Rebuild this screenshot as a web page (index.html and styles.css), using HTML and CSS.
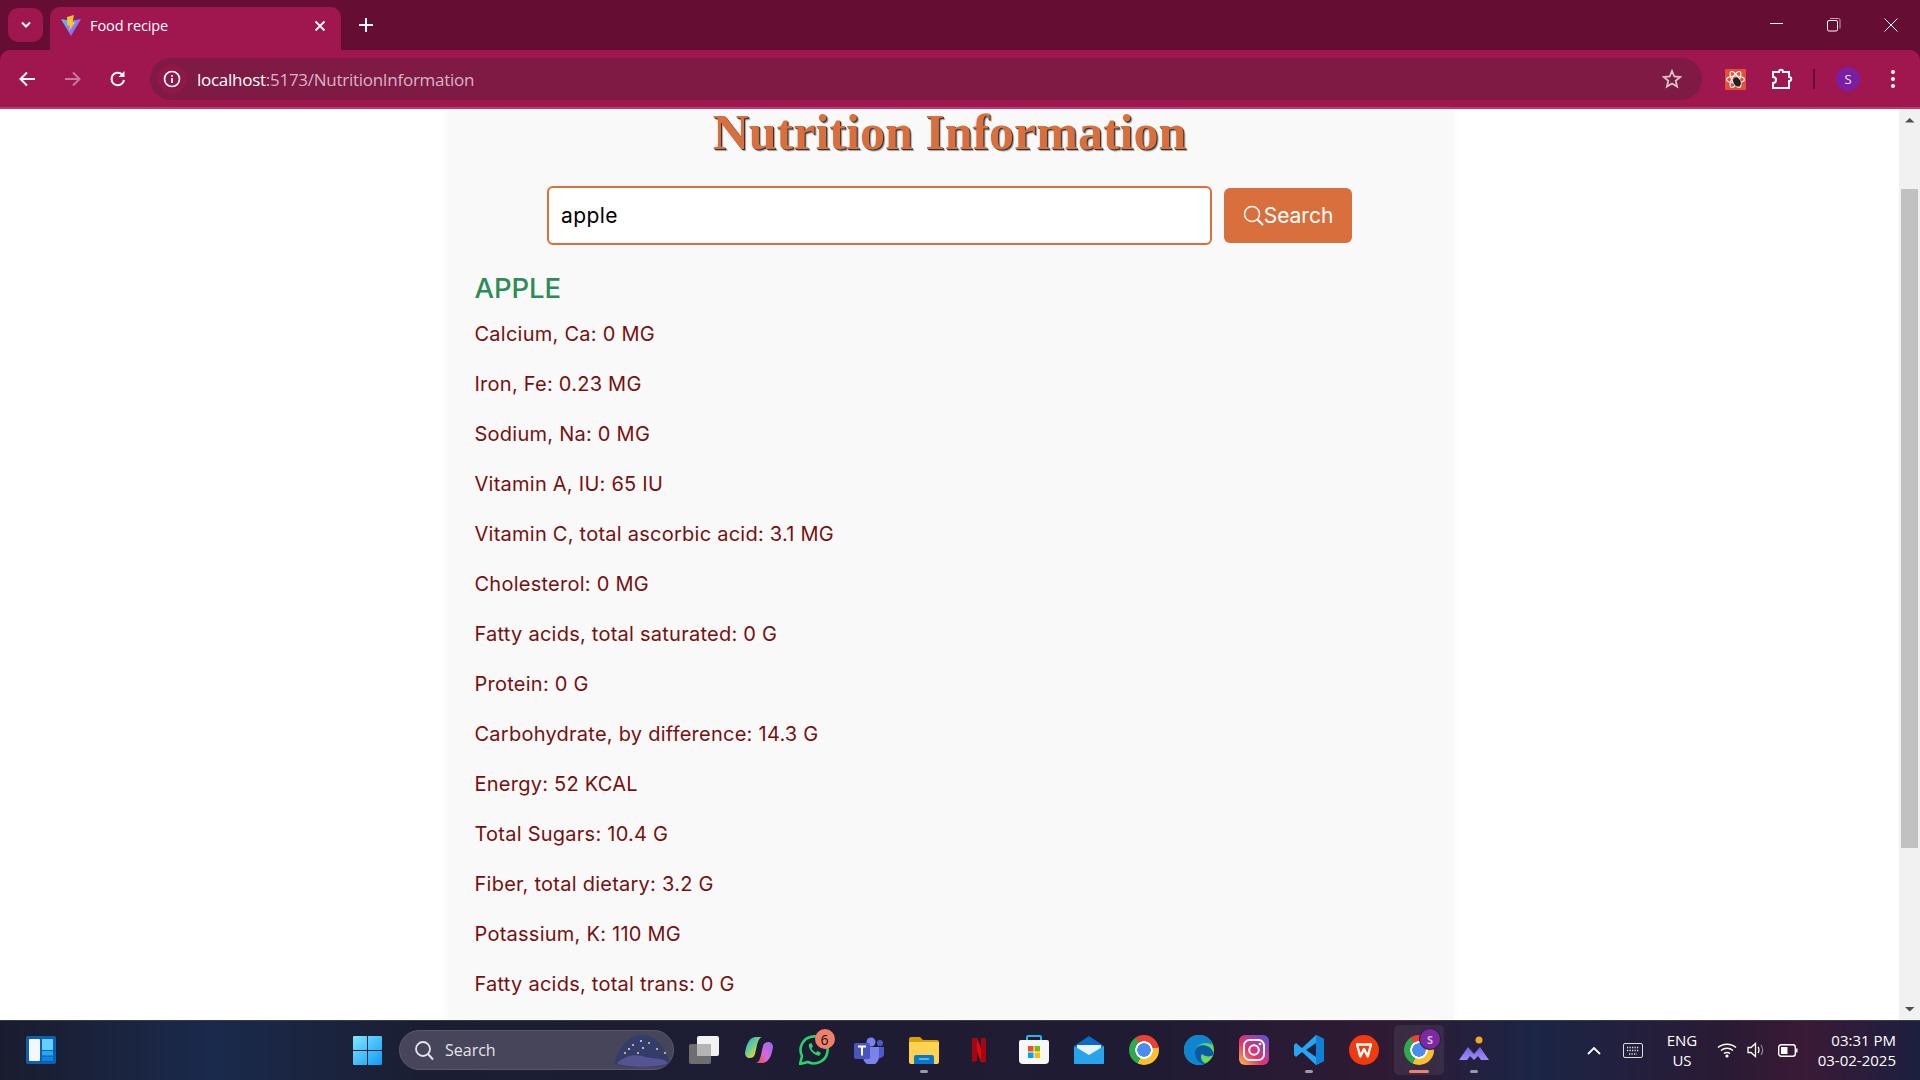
FILE: index.html
```html
<!DOCTYPE html>
<html lang="en">
<head>
<meta charset="utf-8">
<title>Food recipe</title>
<link rel="stylesheet" href="styles.css">
</head>
<body>
<div class="window">
  <header class="chrome">
    <div class="tabstrip">
      <button class="tab-menu"><svg width="12" height="8" viewBox="0 0 12 8"><path d="M2 1.500 6 5.500 10 1.500" fill="none" stroke="#fff" stroke-width="2"/></svg></button>
      <div class="tab">
        <svg class="favicon" width="22" height="22" viewBox="0 0 22 22"><defs><linearGradient id="vg" x1="0" y1="0" x2="1" y2="1"><stop offset="0" stop-color="#41d1ff"/><stop offset="1" stop-color="#bd34fe"/></linearGradient></defs><path d="M1 4 11 6 21 4 11 21Z" fill="url(#vg)"/><path d="M14 0 7 2 7.500 11 10 10.500 9 16 15.500 7 12.500 7.500Z" fill="#ffc62b"/></svg>
        <span class="tab-title">Food recipe</span>
        <svg class="tab-close" width="12" height="12" viewBox="0 0 12 12"><path d="M1.500 1.500 10.500 10.500M10.500 1.500 1.500 10.500" stroke="#fff" stroke-width="1.800"/></svg>
      </div>
      <svg class="new-tab" width="14" height="14" viewBox="0 0 14 14"><path d="M7 0V14M0 7H14" stroke="#fff" stroke-width="2"/></svg>
      <div class="win-controls">
        <svg width="14" height="14" viewBox="0 0 14 14"><path d="M0 5.500H13" stroke="#fff"/></svg>
        <svg width="14" height="14" viewBox="0 0 14 14"><rect x=".5" y="2.500" width="10" height="10.500" rx="1.500" fill="none" stroke="#fff"/><path d="M3 .5H11.500A1.500 1.500 0 0 1 13 2V10.500" fill="none" stroke="#c9a0b4"/></svg>
        <svg width="14" height="14" viewBox="0 0 14 14"><path d="M.5 .5 13.500 13.500M13.500 .5 .5 13.500" stroke="#fff"/></svg>
      </div>
    </div>
    <div class="toolbar">
      <svg class="nav-icon" width="18" height="18" viewBox="0 0 18 18"><path d="M17 9H3M9 2.500 2.500 9 9 15.500" fill="none" stroke="#fff" stroke-width="2"/></svg>
      <svg class="nav-icon" width="18" height="18" viewBox="0 0 18 18"><path d="M1 9H15M9 2.500 15.500 9 9 15.500" fill="none" stroke="#c77a9b" stroke-width="2"/></svg>
      <svg class="nav-icon" width="18" height="18" viewBox="0 0 18 18"><path d="M15 10A6.300 6.300 0 1 1 13 4.300" fill="none" stroke="#fff" stroke-width="2"/><path d="M15.500 1V7H9.500Z" fill="#fff"/></svg>
      <div class="omnibox">
        <span class="info"><svg width="18" height="18" viewBox="0 0 18 18"><circle cx="9" cy="9" r="7.500" fill="none" stroke="#fff" stroke-width="1.700"/><path d="M9 8V13M9 5V6.800" stroke="#fff" stroke-width="1.800"/></svg></span>
        <span class="url"><span class="url-host">localhost</span>:5173/NutritionInformation</span>
        <svg class="star" width="20" height="20" viewBox="0 0 20 20"><path d="M10 2 12.300 7.500 18.200 8 13.700 11.800 15.100 17.600 10 14.500 4.900 17.600 6.300 11.800 1.800 8 7.700 7.500Z" fill="none" stroke="#d6c3cb" stroke-width="1.800"/></svg>
      </div>
      <span class="ext-devtools"><svg width="21" height="21" viewBox="0 0 21 21"><rect width="21" height="21" rx="1" fill="#e2503a"/><g fill="none" stroke="#fff" stroke-width="1.200"><ellipse cx="10.500" cy="10.500" rx="9" ry="3.500"/><ellipse cx="10.500" cy="10.500" rx="9" ry="3.500" transform="rotate(60 10.500 10.500)"/><ellipse cx="10.500" cy="10.500" rx="9" ry="3.500" transform="rotate(120 10.500 10.500)"/></g><ellipse cx="12" cy="13" rx="3.500" ry="4.500" fill="#222" transform="rotate(-30 12 13)"/></svg></span>
      <svg class="puzzle" width="22" height="22" viewBox="0 0 22 22"><path d="M2 4H8C8 1 12 1 12 4H18V9C21 9 21 13 18 13V20H2V15C6 15 6 9 2 9Z" fill="none" stroke="#fff" stroke-width="2"/></svg>
      <span class="tool-divider"></span>
      <span class="avatar">S</span>
      <svg class="kebab" width="6" height="20" viewBox="0 0 6 20"><circle cx="3" cy="3" r="2" fill="#fff"/><circle cx="3" cy="10" r="2" fill="#fff"/><circle cx="3" cy="17" r="2" fill="#fff"/></svg>
    </div>
  </header>

  <div class="viewport">
    <main class="page">
      <section class="card">
        <h1 class="title">Nutrition Information</h1>
        <form class="search-form">
          <input class="search-input" type="text" value="apple">
          <button class="search-btn" type="button">
            <svg width="21" height="21" viewBox="0 0 21 21"><circle cx="9" cy="9" r="7.500" fill="none" stroke="#fff" stroke-width="1.500"/><path d="M14 14 20 20" stroke="#fff" stroke-width="2"/></svg>Search
          </button>
        </form>
        <h2 class="food-name">APPLE</h2>
        <p class="nutrient">Calcium, Ca: 0 MG</p>
        <p class="nutrient">Iron, Fe: 0.23 MG</p>
        <p class="nutrient">Sodium, Na: 0 MG</p>
        <p class="nutrient">Vitamin A, IU: 65 IU</p>
        <p class="nutrient">Vitamin C, total ascorbic acid: 3.1 MG</p>
        <p class="nutrient">Cholesterol: 0 MG</p>
        <p class="nutrient">Fatty acids, total saturated: 0 G</p>
        <p class="nutrient">Protein: 0 G</p>
        <p class="nutrient">Carbohydrate, by difference: 14.3 G</p>
        <p class="nutrient">Energy: 52 KCAL</p>
        <p class="nutrient">Total Sugars: 10.4 G</p>
        <p class="nutrient">Fiber, total dietary: 3.2 G</p>
        <p class="nutrient">Potassium, K: 110 MG</p>
        <p class="nutrient">Fatty acids, total trans: 0 G</p>
      </section>
    </main>
    <aside class="scrollbar">
      <svg width="21" height="21" viewBox="0 0 21 21"><path d="M6 13.500H15.500L10.700 9Z" fill="#505050"/></svg>
      <div class="scroll-track"><div class="scroll-thumb"></div></div>
      <svg width="21" height="21" viewBox="0 0 21 21"><path d="M6 8H15.500L10.700 12.500Z" fill="#505050"/></svg>
    </aside>
  </div>

  <footer class="taskbar">
    <svg class="widgets" width="30" height="28" viewBox="0 0 30 28"><rect width="30" height="28" rx="2" fill="#0f5fb0"/><rect x="3" y="3" width="11" height="22" rx="1" fill="#f4f8fb"/><rect x="16" y="3" width="11" height="11" fill="#62d0ff"/><rect x="16" y="15" width="11" height="4.500" fill="#28a8f0"/><rect x="16" y="20.500" width="11" height="4.500" fill="#0c86dc"/></svg>
    <svg class="start" width="29" height="29" viewBox="0 0 29 29"><defs><linearGradient id="wg" x1="0" y1="0" x2="1" y2="1"><stop offset="0" stop-color="#7fe6ff"/><stop offset="1" stop-color="#0f9bf5"/></linearGradient></defs><path d="M0 1A1 1 0 0 1 1 0H14V14H0ZM15 0H28A1 1 0 0 1 29 1V14H15ZM0 15H14V29H1A1 1 0 0 1 0 28ZM15 15H29V28A1 1 0 0 1 28 29H15Z" fill="url(#wg)"/></svg>
    <div class="taskbar-search">
      <svg width="21" height="21" viewBox="0 0 21 21"><circle cx="9" cy="9" r="7" fill="none" stroke="#e4e4ea" stroke-width="1.800"/><path d="M14 14 19 19.500" stroke="#e4e4ea" stroke-width="2"/></svg>
      <span class="search-label">Search</span>
      <svg class="search-art" width="58" height="34" viewBox="0 0 58 34"><path d="M1 30C6 12 18 2 30 2S52 14 57 30C50 36 10 36 1 30Z" fill="#2f3a70" fill-opacity=".75"/><path d="M4 30C16 20 26 22 32 24S50 24 55 30C48 35 12 35 4 30Z" fill="#5d5a9c" fill-opacity=".8"/><g fill="#f3d37a"><circle cx="20" cy="12" r="1"/><circle cx="36" cy="10" r="1"/><circle cx="44" cy="16" r="1"/><circle cx="12" cy="20" r="1"/><circle cx="25" cy="20" r="1"/><circle cx="52" cy="20" r="1"/></g><g fill="#d9e4ff"><circle cx="28" cy="8" r="1"/><circle cx="16" cy="16" r="1"/><circle cx="30" cy="15" r="1"/></g></svg>
    </div>
    <div class="apps">
      <span class="app"><svg width="30" height="28" viewBox="0 0 30 28"><rect x="8" y="0" width="22" height="20" rx="2" fill="#f2f2f2"/><rect x="0" y="8" width="22" height="20" rx="2" fill="#6e6e6e"/><rect x="8" y="8" width="14" height="12" fill="#b4b4b4"/></svg></span>
      <span class="app"><svg width="28" height="26" viewBox="0 0 28 26"><defs><linearGradient id="cp1" x1="0" y1="0" x2="1" y2="1"><stop offset="0" stop-color="#1f9fe8"/><stop offset=".45" stop-color="#6fd08a"/><stop offset=".75" stop-color="#f6d02f"/><stop offset="1" stop-color="#f07a7a"/></linearGradient><linearGradient id="cp2" x1="1" y1="0" x2="0" y2="1"><stop offset="0" stop-color="#8a6cf0"/><stop offset=".55" stop-color="#d868d8"/><stop offset="1" stop-color="#f04a30"/></linearGradient></defs><path d="M10 0H17C14 1 13 4 12 8L10 17C9 20 7 21 5 21 2 21 0 19 0 16 1 10 3 1 10 0Z" fill="url(#cp1)"/><path d="M18 26H11C14 25 15 22 16 18L18 9C19 6 21 5 23 5 26 5 28 7 28 10 27 16 25 25 18 26Z" fill="url(#cp2)"/></svg></span>
      <span class="app"><svg width="30" height="30" viewBox="0 0 30 30"><path d="M1 29 3 21A13.500 13.500 0 1 1 9 27Z" fill="none" stroke="#25d366" stroke-width="2.600"/><path d="M10 9C9 12 12 19 20 21L22 18 18.500 16 17 17.500C15 17 13 15 12.500 13L14 11.500 12.500 8Z" fill="#25d366"/></svg><span class="badge">6</span></span>
      <span class="app"><svg width="30" height="28" viewBox="0 0 30 28"><circle cx="17" cy="6" r="4.500" fill="#7b83eb"/><circle cx="26" cy="7" r="3" fill="#5059c9"/><path d="M21 11H30V19A5 5 0 0 1 21 20Z" fill="#5059c9"/><path d="M9 11H25V21A8 8 0 0 1 9 21Z" fill="#7b83eb"/><rect x="0" y="7" width="16" height="16" rx="2" fill="#4b53bc"/><path d="M4 10.500H12M8 10.500V19.500" stroke="#fff" stroke-width="2"/></svg></span>
      <span class="app running"><svg width="30" height="27" viewBox="0 0 30 27"><path d="M0 2A2 2 0 0 1 2 0H11L14 3H28A2 2 0 0 1 30 5V8H0Z" fill="#d8a100"/><path d="M0 5H30V25A2 2 0 0 1 28 27H2A2 2 0 0 1 0 25Z" fill="#ffd252"/><path d="M5 20A2 2 0 0 1 7 18H23A2 2 0 0 1 25 20V27H5Z" fill="#0a78c8"/><path d="M10 22H20" stroke="#7cc4f0" stroke-width="1.500"/></svg></span>
      <span class="app"><svg width="14" height="24" viewBox="0 0 14 24"><path d="M0 0H5L14 24H9Z" fill="#e50914"/><path d="M0 0H5V23L0 24ZM9 0H14V24L9 23Z" fill="#a50710"/></svg></span>
      <span class="app"><svg width="30" height="30" viewBox="0 0 30 30"><path d="M8 6V2A1 1 0 0 1 9 1H21A1 1 0 0 1 22 2V6" fill="none" stroke="#25b5ee" stroke-width="2"/><path d="M0 7A2 2 0 0 1 2 5H28A2 2 0 0 1 30 7V25A4 4 0 0 1 26 29H4A4 4 0 0 1 0 25Z" fill="#f7f7f7"/><rect x="9" y="11" width="5.500" height="5.500" fill="#f1511b"/><rect x="15.500" y="11" width="5.500" height="5.500" fill="#80bb00"/><rect x="9" y="17.500" width="5.500" height="5.500" fill="#00a3ee"/><rect x="15.500" y="17.500" width="5.500" height="5.500" fill="#ffb900"/></svg></span>
      <span class="app"><svg width="30" height="28" viewBox="0 0 30 28"><path d="M0 10 15 0 30 10V28H0Z" fill="#0a6cc4"/><path d="M3 9H27V17L15 22 3 17Z" fill="#e8f4fb"/><path d="M0 10 15 19 30 10V27A1 1 0 0 1 29 28H1A1 1 0 0 1 0 27Z" fill="#27a4ec"/></svg></span>
      <span class="app"><span class="chrome-logo"></span></span>
      <span class="app"><svg width="30" height="30" viewBox="0 0 30 30"><defs><linearGradient id="eg" x1="0" y1="0" x2="1" y2="1"><stop offset="0" stop-color="#2fc3a0"/><stop offset="1" stop-color="#7ee04a"/></linearGradient></defs><circle cx="15" cy="15" r="15" fill="url(#eg)"/><path d="M0 15C0 6 7 0 15 0 23 0 28 5 28 10 24 7 16 7 12 13 9 19 14 27 22 28 19 30 17 30 15 30 6 30 0 23 0 15Z" fill="#0f84d0"/><path d="M11 17C11 11 19 8 25 12 29 15 30 18 29 20 27 22 21 22 18 19 16 21 17 26 21 29 15 29 11 24 11 17Z" fill="#0c59a4"/></svg></span>
      <span class="app"><svg width="30" height="30" viewBox="0 0 30 30"><defs><linearGradient id="ig" x1="0" y1="1" x2="1" y2="0"><stop offset="0" stop-color="#fdc04a"/><stop offset=".4" stop-color="#e9316b"/><stop offset="1" stop-color="#5b51d8"/></linearGradient></defs><rect width="30" height="30" rx="6" fill="url(#ig)"/><rect x="5" y="5" width="20" height="20" rx="5.500" fill="none" stroke="#fff" stroke-width="2"/><circle cx="15" cy="15" r="4.800" fill="none" stroke="#fff" stroke-width="2"/><circle cx="21" cy="9" r="1.300" fill="#fff"/></svg></span>
      <span class="app running"><svg width="30" height="30" viewBox="0 0 30 30"><path d="M22 0 30 4V26L22 30 8 17 2 22 0 20V10L2 8 8 13Z" fill="#27a5f2"/><path d="M22 8 12 15 22 22Z" fill="#1d2140"/><path d="M22 0 30 4V26L22 30Z" fill="#0f80d4"/></svg></span>
      <span class="app"><svg width="30" height="30" viewBox="0 0 30 30"><circle cx="15" cy="15" r="15" fill="#f23a0f"/><path d="M8 9.500H22L18.700 21.500 15 14 11.300 21.500Z" fill="none" stroke="#fff" stroke-width="2.400" stroke-linejoin="round"/></svg></span>
      <span class="app active"><span class="chrome-logo"></span><span class="profile-badge">S</span></span>
      <span class="app running"><svg width="30" height="28" viewBox="0 0 30 28"><defs><linearGradient id="mg" x1="0" y1="0" x2="0" y2="1"><stop offset="0" stop-color="#6f62e8"/><stop offset="1" stop-color="#a48cf8"/></linearGradient></defs><circle cx="20" cy="4" r="3.500" fill="#f3a81c"/><path d="M0 24 9 11 15 18 21 11 30 24H22L19 20 15 24 11 20 8 24Z" fill="url(#mg)"/></svg></span>
    </div>
    <div class="tray">
      <svg class="tray-chevron" width="14" height="9" viewBox="0 0 14 9"><path d="M1 8 7 2 13 8" fill="none" stroke="#fff" stroke-width="1.800"/></svg>
      <svg class="tray-kbd" width="20" height="15" viewBox="0 0 20 15"><rect x=".5" y=".5" width="19" height="14" rx="1.500" fill="none" stroke="#ddd"/><path d="M4 4.500H16M4 7.500H16M6 11H14" stroke="#ddd" stroke-width="1.300" stroke-dasharray="1.300 1.200"/></svg>
      <div class="tray-lang"><span>ENG</span><span>US</span></div>
      <svg class="tray-wifi" width="20" height="16" viewBox="0 0 20 16"><path d="M1 5.500C6 1 14 1 19 5.500M4 8.500C7.500 5.500 12.500 5.500 16 8.500M7 11.500C8.500 10.300 11.500 10.300 13 11.500" fill="none" stroke="#fff" stroke-width="1.500"/><circle cx="10" cy="14" r="1.600" fill="#fff"/></svg>
      <svg class="tray-vol" width="18" height="16" viewBox="0 0 18 16"><path d="M1 5.500H4L8.500 1.500V14.500L4 10.500H1Z" fill="none" stroke="#fff" stroke-width="1.300"/><path d="M11 5C12.300 6.500 12.300 9.500 11 11" fill="none" stroke="#fff" stroke-width="1.300"/><path d="M14 3C16 6 16 10 14 13" fill="none" stroke="#8d8598" stroke-width="1.200"/></svg>
      <svg class="tray-batt" width="20" height="13" viewBox="0 0 20 13"><rect x=".7" y=".7" width="16.600" height="11.600" rx="2.500" fill="none" stroke="#fff" stroke-width="1.400"/><rect x="3" y="3" width="6.500" height="7" fill="#fff"/><path d="M18.500 4.500V8.500" stroke="#fff" stroke-width="2"/></svg>
      <div class="tray-clock"><span>03:31 PM</span><span>03-02-2025</span></div>
    </div>
  </footer>
</div>
</body>
</html>
```
FILE: styles.css
```css
* { box-sizing: border-box; }
html, body { margin: 0; height: 100%; overflow: hidden; }
body { font-family: "Inter", "Noto Sans", sans-serif; background: #fff; }
.window { display: flex; flex-direction: column; height: 1080px; }

/* Browser frame */
.chrome { flex: none; height: 109px; background: #660d34; font-family: "Open Sans", "Noto Sans", sans-serif; }
.tabstrip { height: 50px; display: flex; align-items: flex-start; }
.tab-menu { width: 35px; height: 34px; margin: 8px 0 0 8px; border: 0; border-radius: 10px; background: #a0164f; display: flex; align-items: center; justify-content: center; padding: 0; }
.tab { width: 291px; height: 43px; margin: 7px 0 0 7px; background: #a0164f; border-radius: 10px 10px 0 0; display: flex; align-items: center; padding: 0 15px 6px 10px; }
.favicon { flex: none; }
.tab-title { margin-left: 8px; color: #fff; font-size: 14.5px; letter-spacing: -.1px; flex: 1; }
.tab-close { flex: none; }
.new-tab { margin: 18px 0 0 18px; }
.win-controls { margin: 18px 0 0 auto; padding-right: 22px; display: flex; gap: 43px; }
.toolbar { height: 59px; background: #a0164f; border-bottom: 2px solid #bb3d6f; border-radius: 10px 10px 0 0; display: flex; align-items: center; padding: 1px 0 0 18px; }
.nav-icon { flex: none; margin-right: 27.5px; }
.omnibox { flex: none; width: 1552px; height: 42px; margin-left: -4.5px; background: #7e1a44; border-radius: 21px; display: flex; align-items: center; padding: 0 20px 0 7px; }
.info { width: 30px; height: 30px; border-radius: 50%; background: #8f1749; display: flex; align-items: center; justify-content: center; flex: none; }
.url { margin-left: 10px; font-size: 17px; color: #d9b4c5; letter-spacing: -.27px; flex: 1; }
.url-host { color: #fff; }
.ext-devtools { margin-left: 23px; display: flex; }
.puzzle { margin-left: 25px; }
.tool-divider { width: 2px; height: 20px; margin-left: 20px; background: #660d34; }
.avatar { width: 24px; height: 24px; margin-left: 21px; border-radius: 50%; background: #7b1fa2; color: #f3e3f7; font-size: 13px; display: flex; align-items: center; justify-content: center; }
.kebab { margin-left: 30px; }

/* Page */
.viewport { flex: 1; min-height: 0; display: flex; }
.page { flex: 1; min-width: 0; overflow: hidden; background: #fff; }
.card { width: 1002px; margin: 0 auto; background: #f9f9f9; box-shadow: 0 0 10px rgba(0,0,0,.06); padding: 0 26px 60px; }
.title { margin: 0; height: 46px; line-height: 46px; text-align: center; font-family: "Liberation Serif", serif; font-weight: 700; font-size: 50px; color: #d96f3d; text-shadow: 1px 1px 0 #333, 2px 2px 1px rgba(0,0,0,.35); }
.search-form { display: flex; justify-content: center; align-items: center; gap: 12px; margin-top: 31px; }
.search-input { width: 665px; height: 59px; border: 2px solid #d96f3d; border-radius: 6px; background: #fff; padding: 0 12px; font-family: inherit; font-size: 21px; letter-spacing: .4px; color: #000; outline: 0; }
.search-btn { width: 128px; height: 55px; border: 0; border-radius: 6px; background: #d96f3d; color: #fff; font-family: inherit; font-size: 21px; display: flex; align-items: center; justify-content: center; padding: 0; }
.food-name { margin: 23px 0 11px; height: 40px; line-height: 40px; font-size: 27.5px; font-weight: 500; letter-spacing: -.1px; color: #2e8b57; }
.nutrient { margin: 0 0 20px; height: 30px; line-height: 30px; font-size: 20px; letter-spacing: .25px; color: #761010; }

/* Scrollbar */
.scrollbar { flex: none; width: 21px; background: #f1f1f1; display: flex; flex-direction: column; }
.scroll-track { flex: 1; padding: 59px 2px 151px; }
.scroll-thumb { height: 100%; background: #c1c1c1; }

/* Taskbar */
.taskbar { flex: none; height: 60px; display: flex; align-items: center; padding-left: 26px; box-shadow: inset 0 1px 0 #3a3a48; background: linear-gradient(90deg, #1a1c2e 0%, #1a2a4c 11%, #1b1e32 22%, #1e1c33 45%, #1f1b33 60%, #2f1a33 72%, #1b2546 80%, #2a1a33 90%, #3a1a36 94%, #1c1f3f 100%); font-family: "Open Sans", "Noto Sans", sans-serif; }
.widgets { flex: none; }
.start { flex: none; margin-left: 297px; }
.taskbar-search { flex: none; width: 275px; height: 40px; margin-left: 17px; padding: 0 2px 0 14px; border-radius: 20px; background: #46455a; border: 1px solid #5a596c; display: flex; align-items: center; gap: 10px; }
.search-label { flex: 1; color: #e4e4ea; font-size: 16px; }
.search-art { flex: none; }
.apps { flex: none; margin-left: 2.5px; display: flex; }
.app { flex: none; width: 55px; height: 50px; display: flex; align-items: center; justify-content: center; position: relative; }
.running::after, .active::after { content: ""; position: absolute; left: 50%; bottom: 2px; width: 8px; height: 3px; margin-left: -4px; border-radius: 2px; background: #9a9aa4; }
.active::before { content: ""; position: absolute; top: 0; bottom: 0; left: 2.5px; right: 2.5px; background: rgba(255,255,255,.07); border-radius: 5px; }
.active::after { width: 20px; margin-left: -10px; background: #f08070; }
.chrome-logo { position: relative; width: 30px; height: 30px; border-radius: 50%; background: radial-gradient(circle, #4a8cf0 0 6.5px, #fff 7px 8.5px, transparent 9px), conic-gradient(#ea4335 0 80deg, #fbc02d 80deg 205deg, #2fa84f 205deg 325deg, #ea4335 325deg); }
.badge { position: absolute; right: 7px; top: 4px; width: 20px; height: 20px; border-radius: 50%; background: #f08068; color: #111; font-size: 14px; display: flex; align-items: center; justify-content: center; }
.profile-badge { position: absolute; right: 6.5px; top: 4px; width: 20px; height: 20px; border-radius: 50%; background: #7b2aa0; box-shadow: 0 0 0 1px #3a1a50; color: #d8b8e4; font-size: 11px; font-weight: 700; display: flex; align-items: center; justify-content: center; }
.tray { margin-left: auto; padding-right: 24px; display: flex; align-items: center; color: #fff; font-size: 15px; }
.tray-kbd { margin-left: 22px; }
.tray-lang { width: 32px; margin-left: 23px; display: flex; flex-direction: column; align-items: center; line-height: 20px; }
.tray-wifi { margin-left: 19px; }
.tray-vol { margin-left: 10px; }
.tray-batt { margin-left: 13px; }
.tray-clock { width: 78px; margin-left: 20px; display: flex; flex-direction: column; align-items: flex-end; line-height: 20px; white-space: nowrap; }
```
